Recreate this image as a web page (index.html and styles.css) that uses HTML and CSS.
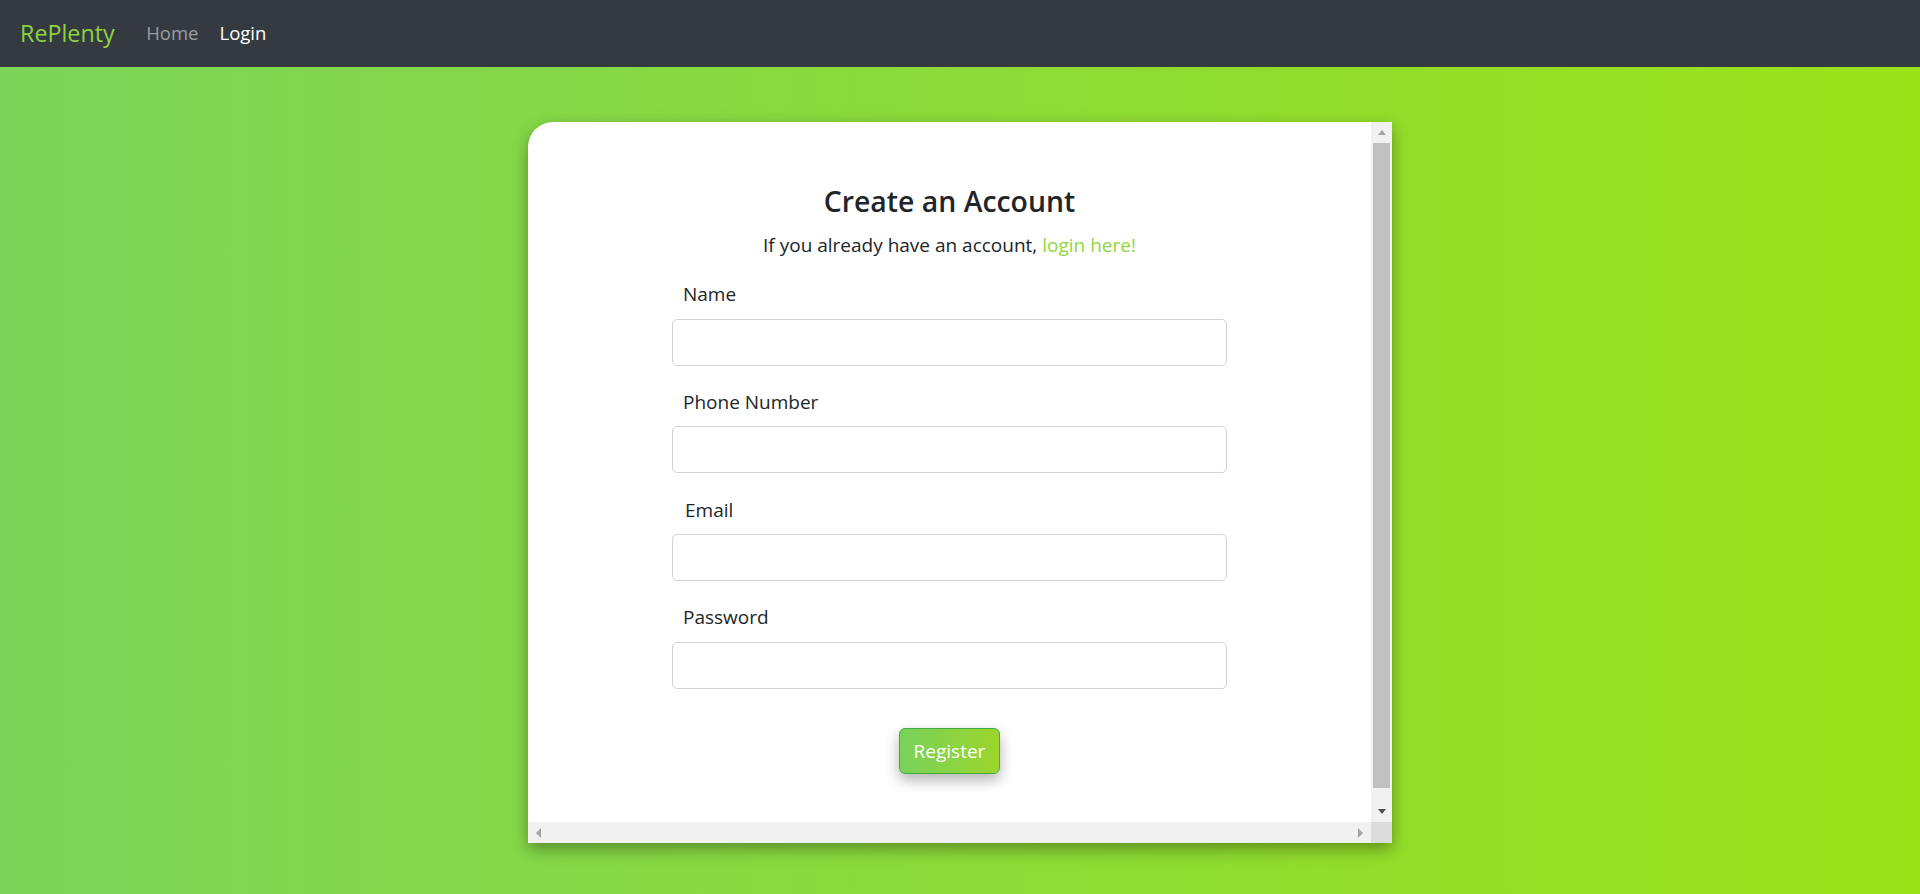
FILE: index.html
```html
<!DOCTYPE html>
<html lang="en">
<head>
    <meta charset="UTF-8">
    <title>RePlenty - Register</title>
    <link rel="stylesheet" href="styles.css">
</head>
<body>
<nav class="navbar">
    <a class="brand" href="#">RePlenty</a>
    <a class="nav-link" href="#">Home</a>
    <a class="nav-link active" href="#">Login</a>
</nav>
<main class="page">
    <div class="card">
        <div class="card-body">
            <div class="card-content">
                <h3 class="title">Create an Account</h3>
                <p class="subtitle">If you already have an account, <a href="#">login here!</a></p>
                <form class="register-form">
                    <div class="form-group">
                        <label for="name">Name</label>
                        <input id="name" class="form-control" type="text">
                    </div>
                    <div class="form-group">
                        <label for="phone">Phone Number</label>
                        <input id="phone" class="form-control" type="tel">
                    </div>
                    <div class="form-group">
                        <label for="email" class="label-email">Email</label>
                        <input id="email" class="form-control" type="email">
                    </div>
                    <div class="form-group">
                        <label for="password">Password</label>
                        <input id="password" class="form-control" type="password">
                    </div>
                    <button class="btn-register" type="button">Register</button>
                </form>
            </div>
            <div class="vscroll">
                <div class="sb-btn"><span class="arrow-up"></span></div>
                <div class="sb-thumb"></div>
                <div class="sb-btn"><span class="arrow-down"></span></div>
            </div>
        </div>
        <div class="hscroll-row">
            <div class="hscroll">
                <div class="sb-btn"><span class="arrow-left"></span></div>
                <div class="sb-btn"><span class="arrow-right"></span></div>
            </div>
            <div class="sb-corner"></div>
        </div>
    </div>
</main>
</body>
</html>
```

FILE: styles.css
```css
html{
    min-height: 100%;
    background: linear-gradient(to right, #7dd45a, #9be118);
}
body{
    margin: 0;
    font-family: "Open Sans", "Noto Sans", sans-serif;
    font-size: 19px;
    line-height: 1.5;
    color: #212529;
}
a{
    text-decoration: none;
}

/* top bar */
.navbar{
    display: flex;
    align-items: center;
    height: 67px;
    padding: 0 20px;
    background-color: #343a40;
    box-sizing: border-box;
}
.brand{
    font-size: 23.3px;
    color: #8dd23f;
    margin-right: 21px;
    line-height: 1.2;
}
.nav-link{
    font-size: 18.5px;
    padding: 0 10.5px;
    color: rgba(255,255,255,.5);
    line-height: 1.2;
}
.nav-link.active{
    color: #fff;
}

/* card */
.page{
    display: flex;
    justify-content: center;
    padding: 55px 0 51px;
}
.card{
    width: 864px;
    height: 721px;
    display: flex;
    flex-direction: column;
    background: #fff;
    border-top-left-radius: 25px;
    overflow: hidden;
    box-shadow: 0 6px 16px rgba(0,0,0,.35);
}
.card-body{
    flex: 1;
    display: flex;
    min-height: 0;
}
.card-content{
    flex: 1;
    padding-top: 62px;
    text-align: center;
}
.title{
    margin: 0 0 12px;
    font-size: 28.4px;
    font-weight: 600;
    line-height: 35px;
}
.subtitle{
    margin: 0 0 20.5px;
}
.subtitle a{
    color: #8fd644;
}

/* form */
.register-form{
    width: 555px;
    margin: 0 auto;
    text-align: left;
}
.form-group{
    margin-bottom: 22.3px;
}
.form-group label{
    display: block;
    padding-left: 11px;
    margin-bottom: 10px;
}
.form-group .label-email{
    padding-left: 13px;
}
.form-control{
    display: block;
    width: 100%;
    height: 47px;
    box-sizing: border-box;
    border: 1px solid #ced4da;
    border-radius: 5px;
    outline: 0;
    padding: 0 15px;
    font: inherit;
}
.form-group:last-of-type{
    margin-bottom: 39px;
}
.btn-register{
    display: block;
    margin: 0 auto;
    height: 46px;
    padding: 0 14px;
    font: inherit;
    color: #fff;
    background: linear-gradient(to right, #78d25b, #9cd52d);
    border: 1px solid #3fab40;
    border-radius: 6px;
    box-shadow: 0 6px 14px rgba(0,0,0,.3);
    cursor: pointer;
}

/* scrollbars drawn inside the card */
.vscroll{
    width: 21px;
    display: flex;
    flex-direction: column;
    background: #f1f1f1;
}
.sb-btn{
    width: 21px;
    height: 21px;
    display: flex;
    align-items: center;
    justify-content: center;
}
.sb-thumb{
    height: 645px;
    margin: 0 2px;
    background: #c1c1c1;
}
.vscroll .sb-btn:last-child{
    margin-top: auto;
}
.arrow-up{
    border-left: 4.5px solid transparent;
    border-right: 4.5px solid transparent;
    border-bottom: 5px solid #a3a3a3;
}
.arrow-down{
    border-left: 4.5px solid transparent;
    border-right: 4.5px solid transparent;
    border-top: 5px solid #505050;
}
.arrow-left{
    border-top: 5px solid transparent;
    border-bottom: 5px solid transparent;
    border-right: 5px solid #a3a3a3;
}
.arrow-right{
    border-top: 5px solid transparent;
    border-bottom: 5px solid transparent;
    border-left: 5px solid #a3a3a3;
}
.hscroll-row{
    display: flex;
    height: 21px;
}
.hscroll{
    flex: 1;
    display: flex;
    justify-content: space-between;
    background: #f1f1f1;
}
.sb-corner{
    width: 21px;
    background: #dcdcdc;
}
```
